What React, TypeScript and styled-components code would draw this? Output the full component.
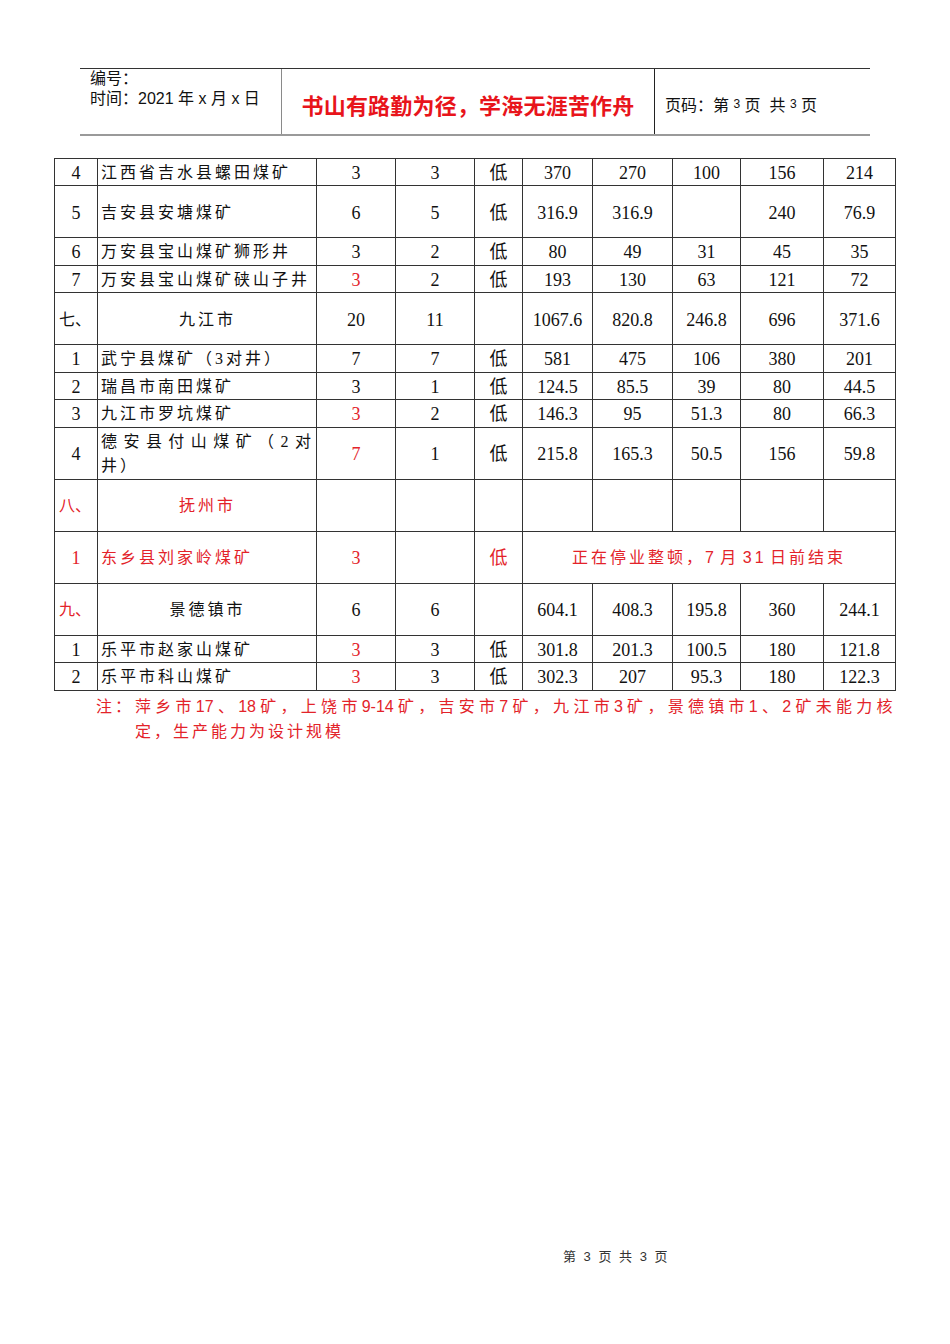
import React from "react";
import styled, { createGlobalStyle } from "styled-components";

const GlobalStyle = createGlobalStyle`
  html, body { margin: 0; padding: 0; background: #fff; }
  body { font-family: "Liberation Serif", "Noto Sans CJK SC", serif; color: #111; text-spacing-trim: space-all; }
`;

const RED = "#e3232a";
const CJK_SANS = `"Liberation Sans", "Noto Sans CJK SC", sans-serif`;
const CJK_TABLE = `"Liberation Serif", "Noto Sans CJK SC", serif`;

const Page = styled.div`
  width: 950px;
  min-height: 1344px;
  padding-top: 68px;
  box-sizing: border-box;
`;

const Header = styled.div`
  margin-left: 80px;
  width: 790px;
  height: 68px;
  display: flex;
  border-top: 1px solid #333;
  border-bottom: 2px solid #9a9a9a;
  box-sizing: border-box;
  font-family: ${CJK_SANS};
  color: #111;
`;

const HeaderCell = styled.div<{ $w: number; $line?: string }>`
  width: ${(p) => p.$w}px;
  flex: none;
  box-sizing: border-box;
  ${(p) => (p.$line ? `border-left: 1px solid ${p.$line};` : "")}
`;

const MetaCell = styled(HeaderCell)`
  padding-left: 10px;
  font-size: 16px;
  line-height: 20px;
`;

const TitleCell = styled(HeaderCell)`
  display: flex;
  align-items: center;
  justify-content: center;
  padding-top: 4px;
`;

const Title = styled.div`
  color: #e8141b;
  font-size: 22px;
  font-weight: 700;
  letter-spacing: 0.2px;
  font-family: "Noto Sans CJK SC", sans-serif;
  white-space: nowrap;
`;

const PageNoCell = styled(HeaderCell)`
  display: flex;
  align-items: center;
  padding: 4px 0 0 10px;
  font-size: 16px;
  white-space: pre;
`;

const SmallDigit = styled.span`
  font-size: 12px;
`;

const Table = styled.table`
  margin: 21.5px 0 0 54px;
  width: 841px;
  border-collapse: collapse;
  table-layout: fixed;
  font-family: ${CJK_TABLE};
`;

const Row = styled.tr<{ $tall?: boolean }>`
  height: ${(p) => (p.$tall ? 52 : 27.5)}px;
`;

const Cell = styled.td<{ $red?: boolean; $align?: string; $kind?: string }>`
  border: 1px solid #333;
  padding: 2px 0 0;
  vertical-align: middle;
  text-align: ${(p) => p.$align || "center"};
  color: ${(p) => (p.$red ? RED : "#111")};
  font-size: 18px;
  line-height: 22px;
  ${(p) =>
    p.$kind === "name" &&
    `
    padding-left: 3px;
    padding-right: 2px;
    font-size: 16px;
    letter-spacing: 3px;
    line-height: 24px;
    text-align: ${p.$align || "justify"};
  `}
  ${(p) =>
    p.$kind === "cat" &&
    `
    padding-left: 4px;
    font-size: 16px;
    text-align: left;
  `}
  ${(p) =>
    p.$kind === "merged" &&
    `
    font-family: ${CJK_SANS};
    font-size: 16px;
    letter-spacing: 3px;
    word-spacing: -4px;
  `}
`;

const Note = styled.div`
  margin: 3px 0 0 96px;
  width: 797px;
  display: flex;
  color: ${RED};
  font-family: ${CJK_SANS};
  font-size: 16px;
  letter-spacing: 3px;
  line-height: 25px;
`;

const NoteLabel = styled.div`
  width: 39px;
  flex: none;
`;

const NoteBody = styled.div`
  flex: 1;
  min-width: 0;
`;

const NoteLine = styled.div<{ $justify?: boolean }>`
  white-space: nowrap;
  ${(p) =>
    p.$justify
      ? "display: flex; justify-content: space-between; letter-spacing: 0;"
      : ""}
`;

const Footer = styled.div`
  margin: 503px 0 0 563px;
  font-family: ${CJK_SANS};
  font-size: 13px;
  letter-spacing: 2px;
  line-height: 20px;
  color: #333;
  white-space: pre;
`;

type R = {
  no: string;
  name: string;
  a?: string;
  b?: string;
  lv?: string;
  v?: string[];
  tall?: boolean;
  cat?: boolean;
  noRed?: boolean;
  nameRed?: boolean;
  aRed?: boolean;
  lvRed?: boolean;
  merged?: string;
};

const rows: R[] = [
  { no: "4", name: "江西省吉水县螺田煤矿", a: "3", b: "3", lv: "低", v: ["370", "270", "100", "156", "214"] },
  { no: "5", name: "吉安县安塘煤矿", a: "6", b: "5", lv: "低", v: ["316.9", "316.9", "", "240", "76.9"], tall: true },
  { no: "6", name: "万安县宝山煤矿狮形井", a: "3", b: "2", lv: "低", v: ["80", "49", "31", "45", "35"] },
  { no: "7", name: "万安县宝山煤矿硖山子井", a: "3", aRed: true, b: "2", lv: "低", v: ["193", "130", "63", "121", "72"] },
  { no: "七、", name: "九江市", a: "20", b: "11", lv: "", v: ["1067.6", "820.8", "246.8", "696", "371.6"], tall: true, cat: true },
  { no: "1", name: "武宁县煤矿（3对井）", a: "7", b: "7", lv: "低", v: ["581", "475", "106", "380", "201"] },
  { no: "2", name: "瑞昌市南田煤矿", a: "3", b: "1", lv: "低", v: ["124.5", "85.5", "39", "80", "44.5"] },
  { no: "3", name: "九江市罗坑煤矿", a: "3", aRed: true, b: "2", lv: "低", v: ["146.3", "95", "51.3", "80", "66.3"] },
  { no: "4", name: "德安县付山煤矿（2对井）", a: "7", aRed: true, b: "1", lv: "低", v: ["215.8", "165.3", "50.5", "156", "59.8"], tall: true },
  { no: "八、", noRed: true, name: "抚州市", nameRed: true, a: "", b: "", lv: "", v: ["", "", "", "", ""], tall: true, cat: true },
  { no: "1", noRed: true, name: "东乡县刘家岭煤矿", nameRed: true, a: "3", aRed: true, b: "", lv: "低", lvRed: true, merged: "正在停业整顿，7 月 31 日前结束", tall: true },
  { no: "九、", noRed: true, name: "景德镇市", a: "6", b: "6", lv: "", v: ["604.1", "408.3", "195.8", "360", "244.1"], tall: true, cat: true },
  { no: "1", name: "乐平市赵家山煤矿", a: "3", aRed: true, b: "3", lv: "低", v: ["301.8", "201.3", "100.5", "180", "121.8"] },
  { no: "2", name: "乐平市科山煤矿", a: "3", aRed: true, b: "3", lv: "低", v: ["302.3", "207", "95.3", "180", "122.3"] },
];

const colWidths = [43, 219, 79, 79, 48, 70, 80, 68, 83, 72];

const noteFirstLine = "萍乡市|17、18|矿，上饶市|9-14|矿，吉安市|7|矿，九江市|3|矿，景德镇市|1、2|矿未能力核";

function splitNote(text: string): string[] {
  const out: string[] = [];
  text.split("|").forEach((part) => {
    if (/[0-9]/.test(part)) {
      part.split(/(、)/).filter(Boolean).forEach((p) => out.push(p));
    } else {
      Array.from(part).forEach((ch) => out.push(ch));
    }
  });
  return out;
}

export default function App() {
  return (
    <>
      <GlobalStyle />
      <Page>
        <Header>
          <MetaCell $w={201}>
            <div>编号：</div>
            <div>时间：2021 年 x 月 x 日</div>
          </MetaCell>
          <TitleCell $w={373} $line="#8a8a8a">
            <Title>书山有路勤为径，学海无涯苦作舟</Title>
          </TitleCell>
          <PageNoCell $w={214} $line="#222">
            页码：第 <SmallDigit>3</SmallDigit> 页  共 <SmallDigit>3</SmallDigit> 页
          </PageNoCell>
        </Header>

        <Table>
          <colgroup>
            {colWidths.map((w, i) => (
              <col key={i} style={{ width: w }} />
            ))}
          </colgroup>
          <tbody>
            {rows.map((r, i) => (
              <Row key={i} $tall={r.tall}>
                <Cell $red={r.noRed} $kind={r.cat ? "cat" : undefined}>
                  {r.no}
                </Cell>
                <Cell $kind="name" $red={r.nameRed} $align={r.cat ? "center" : undefined}>
                  {r.name}
                </Cell>
                <Cell $red={r.aRed}>{r.a}</Cell>
                <Cell>{r.b}</Cell>
                <Cell $red={r.lvRed}>{r.lv}</Cell>
                {r.merged ? (
                  <Cell $kind="merged" $red colSpan={5}>
                    {r.merged}
                  </Cell>
                ) : (
                  (r.v || []).map((val, j) => <Cell key={j}>{val}</Cell>)
                )}
              </Row>
            ))}
          </tbody>
        </Table>

        <Note>
          <NoteLabel>注：</NoteLabel>
          <NoteBody>
            <NoteLine $justify>
              {splitNote(noteFirstLine).map((t, i) => (
                <span key={i}>{t}</span>
              ))}
            </NoteLine>
            <NoteLine>定，生产能力为设计规模</NoteLine>
          </NoteBody>
        </Note>

        <Footer>第 3 页 共 3 页</Footer>
      </Page>
    </>
  );
}
